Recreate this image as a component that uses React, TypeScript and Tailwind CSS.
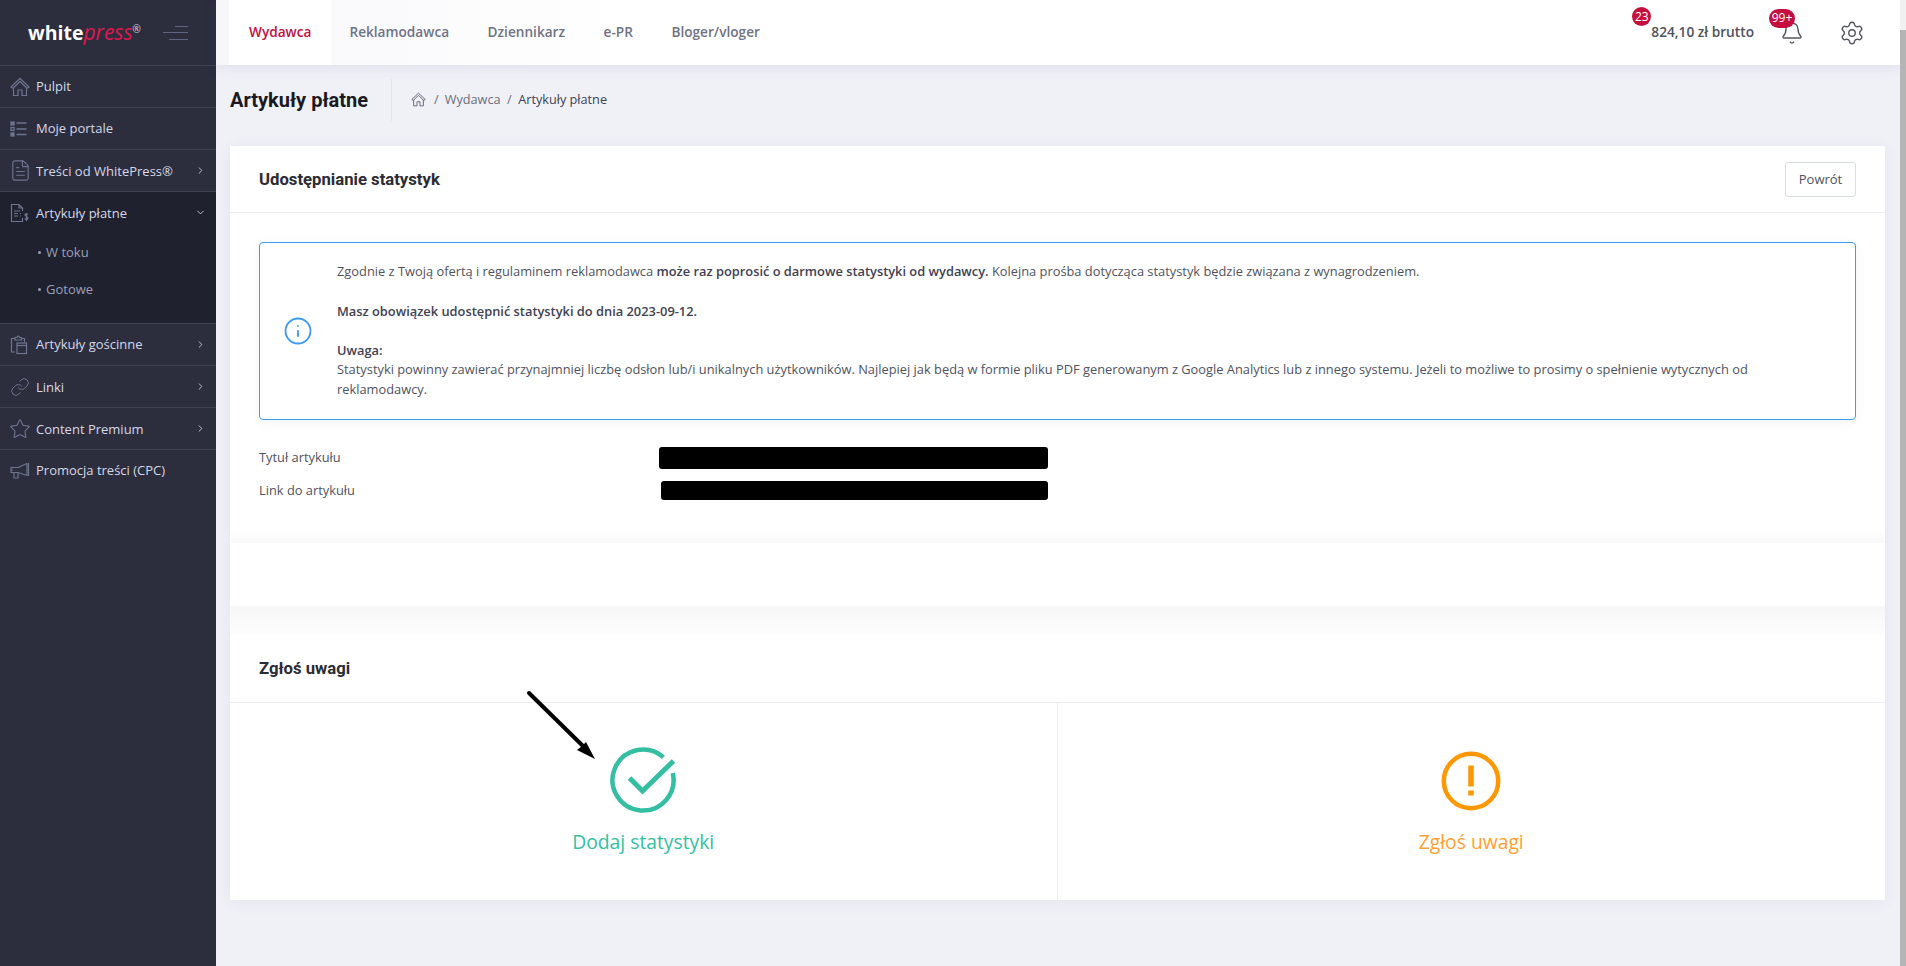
import React from "react";
import { ChevronDown, ChevronRight, FileText, Link, Star, Settings, Bell, Info } from "lucide-react";

const sansFont = "font-['Open_Sans',sans-serif]";
const headFont = "font-['Roboto',sans-serif]";

const HomeIcon = ({ size = 20, color = "#6e7490" }: { size?: number; color?: string }) => (
  <svg width={size} height={size} viewBox="0 0 20 20" fill="none" stroke={color} strokeWidth="1.2">
    <path d="M1 10L10 1.500L19 10L17 11.200L10 4.500L3 11.200z" strokeLinejoin="round" />
    <path d="M3.500 10.500V18.500H8V13H12V18.500H16.500V10.500" />
  </svg>
);

const ListIcon = () => (
  <svg width="18" height="18" viewBox="0 0 18 18" fill="none" stroke="#6e7490" strokeWidth="1.3">
    <rect x="1" y="2" width="3" height="3" fill="#6e7490" />
    <rect x="1" y="7.500" width="3" height="3" />
    <rect x="1" y="13" width="3" height="3" fill="#6e7490" />
    <path d="M6.500 3h10M6.500 9h10M6.500 14.500h10" />
  </svg>
);

const InvoiceIcon = () => (
  <svg width="20" height="20" viewBox="0 0 20 20" fill="none" stroke="#6e7490" strokeWidth="1.200">
    <path d="M12.500 15V18.500H1.500V1.500H9L12.500 5V8M9 1.500V5H12.500" />
    <path d="M4 8h6M4 10.500h4M4 13h4M10 10.500h1M10 13h1" />
    <path d="M18 11.500c-.5-1-3-1-3 .6s3 1.100 3 2.900-2.700 1.600-3.200.5M16.500 10v8" />
  </svg>
);

const ClipboardIcon = () => (
  <svg width="18" height="20" viewBox="0 0 18 20" fill="none" stroke="#6e7490" strokeWidth="1.200">
    <path d="M5 17H1.500V3.500H5M11 3.500h3.500V7" />
    <path d="M5 2.500h2c0-2 2.500-2 2.500 0h2V5H5z" />
    <rect x="7" y="8" width="9.500" height="10.500" />
    <path d="M7 10.500h9.500" />
  </svg>
);

const MegaphoneIcon = () => (
  <svg width="20" height="18" viewBox="0 0 20 18" fill="none" stroke="#6e7490" strokeWidth="1.200">
    <path d="M1 5.500H8L17 1.500V13.500L8 10.500H1z" strokeLinejoin="round" />
    <path d="M18.500 1V14M4 10.500V16H8V11M1 8H3" />
  </svg>
);

const HamburgerIcon = () => (
  <div className="flex w-[25px] flex-col items-end gap-[5.500px]">
    <div className="h-px w-[13px] bg-[#5f6480]" />
    <div className="h-px w-[25px] bg-[#5f6480]" />
    <div className="h-px w-[19px] bg-[#5f6480]" />
  </div>
);

const thinIcon = { color: "#6e7490", strokeWidth: 1.200 };

const menuItems = [
  { label: "Pulpit", icon: <HomeIcon /> },
  { label: "Moje portale", icon: <ListIcon /> },
  { label: "Treści od WhitePress®", icon: <FileText {...thinIcon} size={23} className="-ml-[1px]" />, arrow: true, low: true },
];

const menuItemsBottom = [
  { label: "Artykuły gościnne", icon: <ClipboardIcon />, arrow: true },
  { label: "Linki", icon: <Link {...thinIcon} size={20} />, arrow: true, low: true },
  { label: "Content Premium", icon: <Star {...thinIcon} size={22} className="-ml-[1px]" />, arrow: true, low: true },
  { label: "Promocja treści (CPC)", icon: <MegaphoneIcon /> },
];

type MenuRowProps = { label: string; icon: React.ReactNode; arrow?: boolean; low?: boolean };

const MenuRow = ({ label, icon, arrow, low }: MenuRowProps) => (
  <div className="flex h-[42px] items-center border-t border-[#3f4153] pl-[10px] pr-[10px]">
    <div className="flex w-[26px] shrink-0 items-center justify-start">{icon}</div>
    <span className={`flex-1 text-[13px] text-[#d5d8e8] ${low ? "pt-[3px]" : "pt-px"}`}>{label}</span>
    {arrow && <ChevronRight size={11} color="#c8cadb" strokeWidth={2} />}
  </div>
);

const Sidebar = () => (
  <aside className={`flex w-[216px] shrink-0 flex-col bg-[#2c2e3e] ${sansFont}`}>
    <div className="flex h-[65px] items-center pl-[28px] pr-[28px]">
      <div className="flex flex-1 items-baseline leading-none">
        <span className="text-[19.500px] font-bold text-white">white</span>
        <span className="text-[21px] font-normal italic text-[#e01650]">press</span>
        <span className="relative -top-[7px] text-[10px] text-[#d5d8e8]">®</span>
      </div>
      <HamburgerIcon />
    </div>
    {menuItems.map((item) => (
      <MenuRow key={item.label} {...item} />
    ))}
    <div className="border-t border-[#3f4153] bg-[#1f212e] pb-[16px]">
      <div className="flex h-[41px] items-center pl-[10px] pr-[10px]">
        <div className="flex w-[26px] shrink-0 items-center">
          <InvoiceIcon />
        </div>
        <span className="flex-1 pt-[3px] text-[13px] text-[#d5d8e8]">Artykuły płatne</span>
        <ChevronDown size={11} color="#c8cadb" strokeWidth={2} />
      </div>
      {["W toku", "Gotowe"].map((sub) => (
        <div key={sub} className="flex h-[37px] items-center pl-[38px] pt-[2px] text-[13px] text-[#9a9fb8]">
          <span className="mr-[5px] h-[3px] w-[3px] rounded-full bg-[#9a9fb8]" />
          {sub}
        </div>
      ))}
    </div>
    {menuItemsBottom.map((item) => (
      <MenuRow key={item.label} {...item} />
    ))}
  </aside>
);

const tabs = ["Reklamodawca", "Dziennikarz", "e-PR", "Bloger/vloger"];

const Topbar = () => (
  <header className={`relative flex h-[65px] shrink-0 items-center bg-linear-to-r from-[#f7f7fa] to-white to-[25%] pl-[13px] pr-[35px] shadow-[0_2px_12px_rgba(80,90,130,0.12)] ${sansFont}`}>
    <div className="flex h-full items-center bg-white px-[20px] text-[13.650px] font-semibold text-[#c5103f]">Wydawca</div>
    <div className="ml-[18px] flex items-center gap-[38.500px] text-[13.650px] font-semibold text-[#6f7386]">
      {tabs.map((tab) => (
        <span key={tab}>{tab}</span>
      ))}
    </div>
    <div className="ml-auto flex items-center">
      <div className="relative text-[13.700px] font-semibold text-[#50535f]">
        824,10 zł brutto
        <span className="absolute -left-[19px] -top-[15px] flex h-[19px] w-[19px] items-center justify-center rounded-full bg-[#c5103f] text-[12px] font-normal text-white">23</span>
      </div>
      <div className="relative ml-[26px]">
        <Bell size={24} color="#55585f" strokeWidth={1.400} />
        <span className="absolute -left-[11px] -top-[12px] flex h-[19px] w-[26px] items-center justify-center rounded-full bg-[#c5103f] text-[12px] font-normal text-white">99+</span>
      </div>
      <div className="ml-[35px]">
        <Settings size={26} color="#55585f" strokeWidth={1.300} />
      </div>
    </div>
  </header>
);

const PageTitle = () => (
  <div className="flex h-[81px] shrink-0 items-center pb-[12px]">
    <h1 className={`text-[20px] font-bold text-[#1a1a1f] ${headFont}`}>Artykuły płatne</h1>
    <div className="ml-[23px] h-[42px] w-px bg-[#e2e4ec]" />
    <div className={`ml-[19px] flex items-center text-[12.700px] ${sansFont}`}>
      <HomeIcon size={15} color="#5d6070" />
      <span className="ml-[8px] mr-[6px] text-[#6b6e7c]">/</span>
      <span className="text-[#6b6e7c]">Wydawca</span>
      <span className="mx-[6.500px] text-[#6b6e7c]">/</span>
      <span className="text-[#3f4254]">Artykuły płatne</span>
    </div>
  </div>
);

const InfoBox = () => (
  <div className="flex h-[178px] items-center rounded-[4px] border border-[#3d9bf0] pl-[23px] pr-[30px] text-[12.850px] leading-[19.500px] text-[#50535f] shadow-[0_2px_10px_rgba(80,90,130,0.08)]">
    <Info size={30} color="#3d9bf0" strokeWidth={1.500} className="shrink-0" />
    <div className="ml-[24px] flex-1">
      <p className="-mt-px">
        Zgodnie z Twoją ofertą i regulaminem reklamodawca{" "}
        <b className="font-semibold text-[#3f4254]">może raz poprosić o darmowe statystyki od wydawcy.</b> Kolejna prośba dotycząca statystyk będzie związana z wynagrodzeniem.
      </p>
      <p className="mt-[20.500px] font-semibold text-[#3f4254]">Masz obowiązek udostępnić statystyki do dnia 2023-09-12.</p>
      <p className="mt-[19.500px] font-semibold text-[#3f4254]">Uwaga:</p>
      <p>
        Statystyki powinny zawierać przynajmniej liczbę odsłon lub/i unikalnych użytkowników. Najlepiej jak będą w formie pliku PDF generowanym z Google Analytics lub z innego systemu. Jeżeli to możliwe to prosimy o spełnienie wytycznych od reklamodawcy.
      </p>
    </div>
  </div>
);

const cardClass = "bg-white shadow-[0_2px_14px_rgba(80,90,130,0.08)]";

const DetailRow = ({ label, offset, height }: { label: string; offset: string; height: string }) => (
  <div className="flex h-[33px] items-center text-[12.850px] text-[#50535f]">
    <span className="w-[400px]">{label}</span>
    <div className={`${offset} ${height} flex-1 rounded-[3px] bg-black`} />
  </div>
);

const App = () => (
  <div className="relative flex h-[966px] overflow-hidden bg-[#f0f1f7]">
    <Sidebar />
    <div className="flex min-w-0 flex-1 flex-col pr-[6px]">
      <Topbar />
      <main className={`flex flex-col pl-[14px] pr-[15px] ${sansFont}`}>
        <PageTitle />
        <div className={cardClass}>
          <section>
            <div className="flex h-[67px] items-center justify-between border-b border-[#ebedf2] pl-[29px] pr-[29px]">
              <h2 className={`pt-px text-[16.700px] font-bold text-[#2b2b33] ${headFont}`}>Udostępnianie statystyk</h2>
              <button className="h-[35px] w-[71px] rounded-[3px] border border-[#d8dce6] pt-px text-[13px] text-[#50535f]">Powrót</button>
            </div>
            <div className="bg-linear-to-b from-white from-[96%] to-[#f9f9fa] px-[29px] pb-[36px] pt-[29px]">
              <InfoBox />
              <div className="mt-[21px] w-[789px]">
                <DetailRow label="Tytuł artykułu" offset="" height="h-[22px]" />
                <DetailRow label="Link do artykułu" offset="ml-[2px]" height="h-[19px]" />
              </div>
            </div>
          </section>
          <section className="h-[63px]" />
          <div className="h-[29px] bg-linear-to-b from-[#f7f7f8] to-[#fdfdfd]" />
          <section>
            <div className="flex h-[68px] items-center border-b border-[#ebedf2] pl-[29px]">
              <h2 className={`text-[16.700px] font-bold text-[#2b2b33] ${headFont}`}>Zgłoś uwagi</h2>
            </div>
            <div className="grid h-[197px] grid-cols-2">
              <div className="flex flex-col items-center border-r border-[#ebedf2] pt-[44px]">
                <svg width="66" height="66" viewBox="0 0 66 66" fill="none" stroke="#34bfa3" strokeWidth="4.500">
                  <path d="M53.400 10.300A30.500 30.500 0 1 0 62.700 25.900" />
                  <path d="M19.500 31L32.500 44L63.500 14" strokeWidth="5" />
                </svg>
                <span className="mt-[15px] text-[19.300px] text-[#34bfa3]">Dodaj statystyki</span>
              </div>
              <div className="flex flex-col items-center pt-[48px]">
                <svg width="60" height="60" viewBox="0 0 60 60" fill="none" stroke="#ff9800" strokeWidth="4.500">
                  <circle cx="30" cy="30" r="27.200" />
                  <path d="M30 14.500V35.500M30 39.500V44.500" strokeWidth="5.500" />
                </svg>
                <span className="mt-[17px] text-[19.300px] text-[#ff9f2e]">Zgłoś uwagi</span>
              </div>
            </div>
          </section>
        </div>
      </main>
    </div>
    <svg className="absolute left-[525px] top-[688px]" width="80" height="76" viewBox="0 0 80 76" fill="none">
      <path d="M4 5L60 60" stroke="#000" strokeWidth="4" strokeLinecap="round" />
      <path d="M70 71L52 62L57 58L61 54z" fill="#000" />
    </svg>
    <div className="absolute right-0 top-0 h-full w-[6px] bg-[#f1f1f1]">
      <div className="mt-[30px] h-[936px] w-full bg-[#b5b5b5]" />
    </div>
  </div>
);

export default App;
